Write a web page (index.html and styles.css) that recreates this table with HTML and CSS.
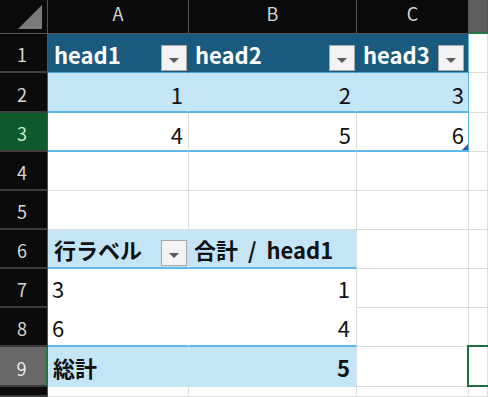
FILE: index.html
```html
<!DOCTYPE html>
<html lang="ja">
<head>
<meta charset="utf-8">
<title>Sheet</title>
<link rel="stylesheet" href="styles.css">
</head>
<body>
<div class="sheet">
  <!-- header row -->
  <div class="cell hdr corner"><span class="corner-tri"></span></div>
  <div class="cell hdr colh">A</div>
  <div class="cell hdr colh">B</div>
  <div class="cell hdr colh">C</div>
  <div class="cell hdr colh colsel"></div>

  <!-- row 1 -->
  <div class="cell hdr rowh">1</div>
  <div class="cell th"><span>head1</span><span class="dd"></span></div>
  <div class="cell th"><span>head2</span><span class="dd"></span></div>
  <div class="cell th tr"><span>head3</span><span class="dd"></span></div>
  <div class="cell"></div>

  <!-- row 2 -->
  <div class="cell hdr rowh">2</div>
  <div class="cell band num tb">1</div>
  <div class="cell band num tb">2</div>
  <div class="cell band num tb tr">3</div>
  <div class="cell"></div>

  <!-- row 3 -->
  <div class="cell hdr rowh rowgreen">3</div>
  <div class="cell num tb">4</div>
  <div class="cell num tb">5</div>
  <div class="cell num tb tr handle">6</div>
  <div class="cell"></div>

  <!-- row 4 -->
  <div class="cell hdr rowh">4</div>
  <div class="cell"></div>
  <div class="cell"></div>
  <div class="cell"></div>
  <div class="cell"></div>

  <!-- row 5 -->
  <div class="cell hdr rowh">5</div>
  <div class="cell"></div>
  <div class="cell"></div>
  <div class="cell"></div>
  <div class="cell"></div>

  <!-- row 6 -->
  <div class="cell hdr rowh">6</div>
  <div class="cell pv pvh nogrid"><span>行ラベル</span><span class="dd"></span></div>
  <div class="cell pv pvh sum">合計 / head1</div>
  <div class="cell"></div>
  <div class="cell"></div>

  <!-- row 7 -->
  <div class="cell hdr rowh">7</div>
  <div class="cell pvw nogrid">3</div>
  <div class="cell pvw num">1</div>
  <div class="cell"></div>
  <div class="cell"></div>

  <!-- row 8 -->
  <div class="cell hdr rowh">8</div>
  <div class="cell pvw nogrid pvlast">6</div>
  <div class="cell pvw num pvlast">4</div>
  <div class="cell"></div>
  <div class="cell"></div>

  <!-- row 9 -->
  <div class="cell hdr rowh rowsel">9</div>
  <div class="cell pv pvt nogrid">総計</div>
  <div class="cell pv pvt num">5</div>
  <div class="cell"></div>
  <div class="cell active"></div>

  <!-- row 10 -->
  <div class="cell hdr rowh"></div>
  <div class="cell"></div>
  <div class="cell"></div>
  <div class="cell"></div>
  <div class="cell"></div>
</div>
</body>
</html>
```

FILE: styles.css
```css
html, body {
  margin: 0;
  padding: 0;
  background: #ffffff;
}

body {
  font-family: "Noto Sans CJK JP", "Noto Sans", sans-serif;
  color: #111111;
  overflow: hidden;
}

.sheet {
  display: grid;
  grid-template-columns: 48px 141px 168px 112px 19px;
  grid-template-rows: 34px 39px 40px 39px 39px 39px 39px 39px 39px 40px 10px;
  width: 488px;
  height: 397px;
}

.cell {
  box-sizing: border-box;
  position: relative;
  display: flex;
  align-items: center;
  padding: 0 5px 0 6px;
  border-right: 1px solid #dddddd;
  border-bottom: 1px solid #dddddd;
  font-size: 22px;
  line-height: 1;
  white-space: nowrap;
  overflow: hidden;
}

.num {
  justify-content: flex-end;
}

/* headers */
.hdr {
  background: #0b0b0b;
  color: #d6d6d6;
  font-size: 18px;
  justify-content: center;
  padding: 0;
  border-right: 1px solid #555555;
  border-bottom: 1px solid #555555;
}

.colh {
  padding-bottom: 8px;
}

.rowh {
  padding-right: 3px;
  padding-top: 3px;
  border-bottom: 2px solid #3c3c3c;
}

.corner {
  overflow: visible;
}

.corner-tri {
  position: absolute;
  right: 5px;
  bottom: 4px;
  width: 24px;
  height: 24px;
  background: #7a7a7a;
  clip-path: polygon(100% 0, 100% 100%, 0 100%);
}

.colsel {
  background: #5e5e5e;
  border-bottom: 2px solid #1f7a45;
}

.rowgreen {
  background: #0f5a2c;
  color: #cfe9d6;
}

.rowsel {
  background: #686868;
  color: #e8e8e8;
  border-right: 2px solid #1f7a45;
}

/* table */
.th {
  background: #195a7e;
  color: #ffffff;
  font-weight: bold;
  justify-content: space-between;
  align-items: center;
  padding-right: 1px;
  border-right-color: #195a7e;
  border-bottom: 1px solid #4aa6d6;
}

.th span:first-child {
  padding-top: 1px;
}

.band {
  background: #c3e5f6;
  border-right-color: #c3e5f6;
}

.tb {
  border-bottom: 2px solid #5db8e6;
  padding-top: 4px;
}

.tr {
  border-right: 1px solid #5db8e6;
  padding-right: 4px;
}

.handle::after {
  content: "";
  position: absolute;
  right: 0;
  bottom: 0;
  width: 6px;
  height: 6px;
  background: #3b4fae;
  clip-path: polygon(100% 0, 100% 100%, 0 100%);
}

/* dropdown button */
.dd {
  box-sizing: border-box;
  width: 26px;
  height: 26px;
  flex: none;
  align-self: flex-end;
  margin-bottom: 1px;
  border: 1px solid #a8a8a8;
  background: #f3f3f3;
  display: flex;
  align-items: center;
  justify-content: center;
}

.dd::before {
  content: "";
  width: 0;
  height: 0;
  margin-top: 4px;
  border-left: 5px solid transparent;
  border-right: 5px solid transparent;
  border-top: 5px solid #5a5a5a;
}

/* pivot */
.pv {
  background: #c3e5f6;
  font-weight: bold;
}

.pvh {
  justify-content: flex-start;
  border-bottom: 2px solid #5db8e6;
  padding-right: 1px;
}

.pvh.nogrid {
  justify-content: space-between;
}

.sum {
  word-spacing: 5px;
  padding-left: 5px;
}

.pvh .dd {
  margin-bottom: 1px;
}

.pvt {
  border-bottom-color: #c3e5f6;
  padding-left: 5px;
}

.pvt.num {
  padding-right: 6px;
}

.pvw {
  padding-left: 4px;
  border-bottom-color: #ffffff;
}

.pvw.num {
  padding-right: 6px;
}

.nogrid {
  border-right-color: transparent;
}

.pv.nogrid {
  border-right-color: #c3e5f6;
}

.pvw.nogrid {
  border-right-color: #ffffff;
}

.pvlast {
  border-bottom: 2px solid #5db8e6;
}

.active {
  overflow: visible;
}

.active::after {
  content: "";
  position: absolute;
  left: -2px;
  top: -2px;
  right: -6px;
  bottom: -1px;
  border: 2px solid #1e6f3f;
}
```
